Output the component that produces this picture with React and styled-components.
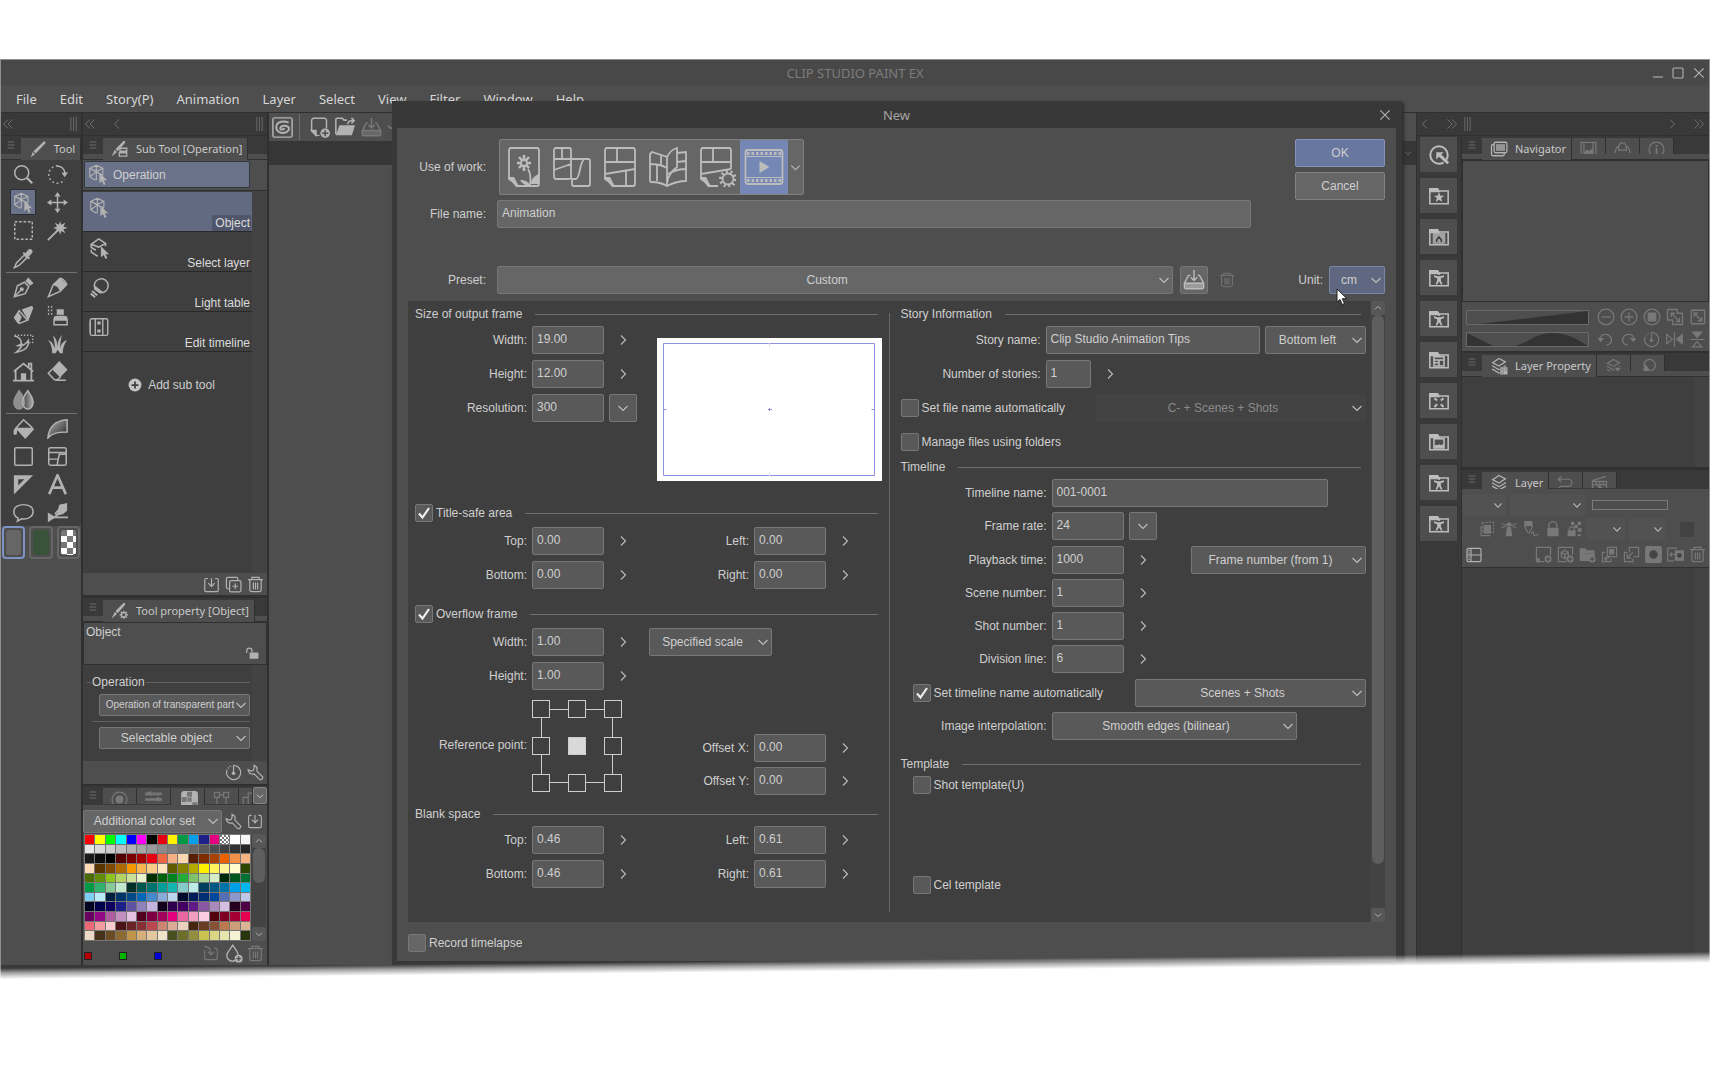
import React from "react";
import styled, { createGlobalStyle, css } from "styled-components";

const c = {
  base: "#4e4e4e",
  panel: "#3f3f3f",
  lane: "#434343",
  header: "#393939",
  edge: "#303030",
  field: "#595959",
  fieldLight: "#666666",
  line: "#727272",
  text: "#cfcfcf",
  icon: "#b2b2b2",
  dim: "#787878",
  blue: "#6a7289",
};

const ui = `"Liberation Sans", Arial, sans-serif`;
const system = `"Noto Sans", "Open Sans", sans-serif`;

const Global = createGlobalStyle`
  *, *::before, *::after { box-sizing: border-box; }
  body { margin: 0; background: #fff; font: 12px/16px ${ui}; color: ${c.text}; }
  button, input, select { font: inherit; color: inherit; margin: 0; }
  button { padding: 0; border: 0; background: none; }
  svg { display: block; flex: none; }
`;

/* ---------- icons ---------- */

const cube = (
  <>
    <path d="M9.500 1.500 17 5v7M9.500 1.500 2 5v9.500l6.500 4M2 5l7.500 3.500L17 5M9.500 8.500v10M2 14.500 9.500 9M2 5l15 8M9.500 1.500v7" strokeWidth="1.300" />
    <path d="M13 10v12l3-2.500 2 4.500 2-1-2-4.300h4z" fill="currentColor" stroke="none" />
  </>
);
const folder = <path d="M2 20.500V4.500h8l1.500 2H22v14z" />;
const folderTab = <path d="M2 4h8.500l1.500 3H2z" fill="currentColor" />;
const stack = <path d="M12 2 20.500 6.500 12 12 3.500 7.500zM3.500 11v1L12 17l8.500-5v-1M3.500 15.500v1L12 21.500l8.500-5v-1" />;
const person = <path d="M12 8.800a1.600 1.600 0 1 0 0-3.200 1.600 1.600 0 0 0 0 3.200M6.500 9l4 1h3l4-1v1.800l-3.500 1.500v2.500l1.800 4.200H14l-2-3.500-2 3.500H8.200L10 14.800v-2.500l-3.500-1.500z" fill="currentColor" stroke="none" />;
const badge = (
  <>
    <circle cx="18.500" cy="18.500" r="5" fill="currentColor" stroke="none" />
    <path d="M18.500 15.500v6M15.500 18.500h6" stroke={c.base} />
  </>
);

const icons = {
  magnifier: <><circle cx="10" cy="10" r="8" /><path d="m16 16 6 6" strokeWidth="2.600" /></>,
  rotate: <><path d="M12 2a10 10 0 1 0 8 16" strokeDasharray="2 3" /><path d="M11 2.300c5 0 9 3 9.500 8.500" /><path d="m16.500 10 3.800 5L24 9.500z" fill="currentColor" stroke="none" /></>,
  cube,
  move: <><path d="M12 3v18M3 12h18" /><path d="M12 0l3.500 5h-7zM12 24l3.500-5h-7zM0 12l5-3.500v7zM24 12l-5-3.500v7z" fill="currentColor" stroke="none" /></>,
  marquee: <rect x="2" y="2" width="20" height="20" strokeDasharray="3 2" />,
  wand: <><path d="M1 23 13 11" strokeWidth="2" /><path d="m15 1 1.300 4.500L21 3l-2.300 4.500L23.500 9l-4.800 1.500L21 15l-4.700-2.300L15 17l-1.300-4.500L9 15l2.300-4.500L7 9l4.500-1.500L9 3l4.700 2.500z" fill="currentColor" stroke="none" /></>,
  dropper: <><path d="M1.500 22.500 4 17l9-9 3 3-9 9z" /><path d="m11 6 7 7 1.500-1.500-1.500-1.500 4-4.500a3 3 0 0 0-4-4L14 6l-1.500-1.500z" fill="currentColor" stroke="none" /></>,
  pen: <><path d="M1.500 22.500 5 10l8-4 5 5-4 8z" /><path d="m1.500 22.500 8-8" /><path d="m14 4.500 5.500 5.500 4-3L17.500.5z" fill="currentColor" stroke="none" /><circle cx="10" cy="14" r="1.500" fill="currentColor" /></>,
  pencil: <><path d="M1.500 22.500 7 9 15 1.500c3 .5 7 4 7.500 7L15 16.500z" /><path d="M7 9 15 1l8 7.500-8 8-3-5z" fill="currentColor" stroke="none" /></>,
  brush: <><path d="M2 14.500 7.500 21l9-3.500L7 6.500z" /><path d="M1 14.500 6 8l4 6-4 8zM10 5l11-4c2 0 2 2 2 3l-5.500 14z" fill="currentColor" stroke="none" /></>,
  airbrush: <><path d="M8 22.500V17c0-3 1-4 4-4h7c3 0 4 1 4 4v5.500zM12 11V6h6v5" /><path d="M8 13h15v5H8zM11 5h8v6h-7z" fill="currentColor" stroke="none" /><path d="M1 2h7M1 6h6M1 10h6" strokeDasharray="1.500 2" strokeWidth="2" /></>,
  decoration: <><path d="M2 2.500h20.500V11h-6" strokeDasharray="1.500 2" /><path d="M1.500 3.500c5 1 8 4 8 8-.5 2-2 2-4 3 6 1 9-1 12-6 1 7-4 12-14 13.500 5-4 7-6 7-10" /></>,
  grass: <path d="M6 23C6 16 4 11 1 8c5 2 7 6 8 10C9 11 8 7 7 3c4 3 5 9 5 13 0-6 2-10 5-14-1 5-2 10-2 15 1-5 4-8 8-9-3 4-5 9-5 15h-3l-3-4-2 4z" fill="currentColor" stroke="none" />,
  house: <><path d="M3 11v11.500M21 11v11.500M0 22.500h24M1 12 12 3l11 9M18 7V3h3v6" strokeWidth="2" /><path d="M9 14h6v8H9z" fill="currentColor" stroke="none" /></>,
  eraser: <><path d="M14 0 23.500 10 15 18.500 5.500 9z" fill="currentColor" stroke="none" /><path d="M6 9.500 1.500 14l7 7.500h3.500l4-4M10 22h11.500" /></>,
  blend: <><defs><linearGradient id="blendFill"><stop offset="0" stopColor="#b2b2b2" stopOpacity="0" /><stop offset="1" stopColor="#b2b2b2" /></linearGradient></defs><path d="M7 2c4 5 6 8 6 13s-3 8-6 8-6-3-6-8S4 7 7 2z" fill="currentColor" opacity=".7" /><path d="M17 2c-4 5-6 8-6 13s3 8 6 8 6-3 6-8-3-8-6-13z" fill="url(#blendFill)" /></>,
  bucket: <><path d="M3 12 12 2l10 9" strokeWidth="1.800" /><path d="M3 11h20l1 2-10 11L5 14l-1 5H1c-1-4 0-7 2-8z" fill="currentColor" stroke="none" /></>,
  gradient: <><defs><linearGradient id="arcFill" x1="0" x2="1" y1="0" y2="1"><stop offset="0" stopColor="#b2b2b2" /><stop offset=".8" stopColor="#3f3f3f" /></linearGradient></defs><path d="M1 23C2 11 9 3 23 2v14C13 16 6 17 1 23z" fill="url(#arcFill)" /></>,
  square: <rect x="2" y="2" width="20" height="20" rx="1.500" />,
  frames: <><rect x="2" y="2" width="20" height="20" rx="2" /><path d="M2 7.500h20M2 15h10M22 9.500H14L11.500 22" /></>,
  ruler: <path d="M1 1.500h22L1 23.500zM6 6v7l7-7z" fill="currentColor" fillRule="evenodd" stroke="none" />,
  text: <path d="M2.500 23 12 1.500 21.500 23M6 15.500h12" strokeWidth="3" />,
  balloon: <path d="M12 3c6 0 11 3 11 8s-5 8.500-11 8.500l-2-.2L5 22l1-3.500C3 17 1 14 1 11c0-5 5-8 11-8z" />,
  correct: <><path d="M1 17.500h23M9 14l5-6" strokeWidth="2" /><path d="M1 12l9 5.500L1 23zM14 3l9-2v9l-5 4-5 1-3 3-2-1 4-5z" fill="currentColor" stroke="none" /></>,
  layers: <><path d="M10.500 2 18 7l-7.500 4L2.500 8zM2.500 8v3.500l5 3M2.500 14v2.500l7 4.500M18 7v3" /><path d="M13 10v12l3-2.500 2 4.500 2-1-2-4.300h4z" fill="currentColor" stroke="none" /></>,
  lightTable: <><path d="M7 14a8 8 0 1 1 6 4z" /><path d="M6 9 17 18H11l-5-4z" fill="currentColor" stroke="none" /><path d="m3.500 16 6 5M2 19l5 4" strokeWidth="2.200" /></>,
  timeline: <><rect x="1.500" y="2" width="21" height="20" rx="2" /><path d="M7.500 2v20M16.500 2v20M1.500 5v14" /><path d="M10 5.500h4v3.500h-4zM10 15h4v3.500h-4z" fill="currentColor" stroke="none" /></>,
  brushTab: <path d="M20 1.500c2 0 2.500 1.500 1.500 3L9 18l-3-3zM5 16l3 3-5.500 3.500z" fill="currentColor" stroke="none" />,
  subTab: <><path d="M17 1c2 0 2.500 1.500 1.500 3L9 15l-3-3zM5 13l3 3-7 6z" fill="currentColor" stroke="none" /><path d="M12 11h9v4h-9zM11 17h10v4.500H11z" /></>,
  propTab: <><path d="M17 1c2 0 2.500 1.500 1.500 3L9 15l-3-3zM5 13l3 3-7 6z" fill="currentColor" stroke="none" /><circle cx="17" cy="17" r="3" /><path d="M17 11.500V14M17 20v2.500M11.500 17H14M20 17h2.500M13 13l2 2M19 19l2 2M21 13l-2 2M15 19l-2 2" /></>,
  plusDisc: <><circle cx="12" cy="12" r="11" fill="currentColor" stroke="none" /><path d="M12 6v12M6 12h12" stroke={c.panel} strokeWidth="3" /></>,
  save: <><path d="M7 3.500H4.500a2 2 0 0 0-2 2V20a2 2 0 0 0 2 2h15a2 2 0 0 0 2-2V5.500a2 2 0 0 0-2-2H17" /><path d="M12 3v11M7.500 10l4.500 5 4.500-5" /></>,
  duplicate: <><path d="M6 18H4a2 2 0 0 1-2-2V4a2 2 0 0 1 2-2h12a2 2 0 0 1 2 2v2" /><rect x="6.500" y="6.500" width="16" height="16" rx="2" /><path d="M14.500 10.500v8M10.500 14.500h8" /></>,
  trash: <path d="M1.500 5h21M7 5V2h10v3M4 5v14a3 3 0 0 0 3 3h10a3 3 0 0 0 3-3V5M9 9v10M12 9v10M15 9v10" />,
  unlock: <><path d="M3 12V8a4.500 4.500 0 0 1 9 0v3" strokeWidth="2" /><rect x="8" y="11" width="15" height="11" rx="1.500" fill="currentColor" stroke="none" /></>,
  dial: <><path d="M12 2a10 10 0 1 1-9 6" /><path d="M4 6 9 2" strokeDasharray="1.500 2" strokeWidth="2" /><path d="M12 2v9" /><circle cx="12" cy="13" r="2.500" fill="currentColor" stroke="none" /></>,
  wrench: <path d="M10 2c3 1 5 4 4 8l8 8c1 2-2 5-4 4l-8-8c-4 1-8-1-8.500-6l4.500 2 3-1 1-3z" />,
  drop: <><path d="M11 1.500c4 6 7 9 7 13a7 7 0 0 1-14.500 0c0-4 4-7 7.500-13z" />{badge}</>,
  importSet: <path d="M2 2c6 0 10 3 10 12M7.500 10l4.500 5 4.500-5M17 5h2.500a2 2 0 0 1 2 2v13a2 2 0 0 1-2 2h-15a2 2 0 0 1-2-2V8" />,
  wheel: <><circle cx="12" cy="12" r="10.500" /><circle cx="12" cy="12" r="5.500" fill="currentColor" stroke="none" /></>,
  sliders: <><path d="M1 3h22v2H1zM1 11h22v2H1zM1 19h22v2H1z" /><path d="M4 3 8 6 8 1zM15 11l4 3v-5z" fill="currentColor" /></>,
  colorSet: <><rect x="1" y="1" width="22" height="22" rx="3" fill="currentColor" /><path d="M8.500 1h7v7h-7zM1 8.500h7v7H1zM16 16h7v6h-7zM9 9h6v6H9z" fill="#777" stroke="none" /></>,
  nodes: <><rect x="2" y="2" width="7" height="7" /><rect x="15" y="2" width="7" height="7" /><path d="M9 5.500h6M5.500 9v11M18.500 9v11M2 20h7M15 20h7" /></>,
  history: <path d="M13 24V3h9M13 9H6v15" />,
  swirl: <><rect x="1" y="1" width="22" height="22" rx="2" /><path d="M19 6.500C14 4 6 5 5 10.500S9 19 14 18s7-5 4-7-8-1-8.500 1.500S12 15 14.500 13" strokeWidth="2.200" /></>,
  newDoc: <><path d="M20 13V4a2.500 2.500 0 0 0-2.500-2.500h-12A2.500 2.500 0 0 0 3 4v12l5 5h4" /><path d="M3 15.500h5V21z" fill="currentColor" /><circle cx="18.500" cy="18.500" r="5.500" fill="currentColor" stroke="none" /><path d="M18.500 15v7M15 18.500h7" stroke={c.base} /></>,
  open: <><path d="M2 20V4c0-1 .5-1.500 1.500-1.500H9l2 2h3M15 9c0-3 2-4 6-4M19 2l3 3-3 3" /><path d="M6 10h17l-3.500 11H2z" fill="currentColor" stroke="none" /></>,
  saveDisk: <><path d="M8 7H6L1.500 15.500V20c0 1 .5 1.500 1.500 1.500h18c1 0 1.500-.5 1.500-1.500v-4.500L18 7h-2M1.500 15.500h21M12 1v11M8.500 9l3.500 3.500L15.500 9" /><path d="M2 16h20v5H2z" fill="currentColor" opacity=".6" stroke="none" /></>,
  quick: <><path d="M21.500 12a9.500 9.500 0 1 0-9.500 9.500" strokeWidth="2.200" /><path d="M21.500 12c0 2-.6 4-1.500 5M12 21.500c2 0 3.500-.5 5-1.500" strokeWidth="2.200" /><path d="M9 9h8l-2.500 2.500L23 20l-2 2-9-8-3 3z" fill="currentColor" stroke="none" /></>,
  fStar: <>{folder}{folderTab}<path d="m12 7.500 1.500 4.200h4.300l-3.500 2.600 1.300 4.200-3.600-2.500-3.600 2.500 1.300-4.200-3.500-2.600h4.300z" fill="currentColor" stroke="none" /></>,
  fHome: <>{folder}{folderTab}<rect x="6" y="8.500" width="12" height="10" fill="currentColor" opacity=".75" /><path d="M9.500 17.500v-2.500l2.500-3 2.500 3v2.500" stroke="#3f3f3f" /></>,
  fPerson: <>{folder}{folderTab}{person}</>,
  fFrame: <>{folder}{folderTab}<path d="M6.500 8.500h11v10h-11zM6.500 12h11M12 12v6M6.500 15H12" /></>,
  fBurst: <>{folder}{folderTab}<path d="m7 9 3 2.500M17 9l-3 2.500M7 18.500l3-3M17 18.500l-3-3" strokeWidth="2.200" /></>,
  fImage: <>{folder}<path d="M2 4h8.500l1.500 3H2z" fill="currentColor" /><rect x="6.500" y="8.500" width="11" height="10" /><path d="m7 16 2-1 1.500.5 2-1 1.500 1 1.500-.5 1.500-1V18H7z" fill="currentColor" stroke="none" /></>,
  navigator: <><rect x="2" y="6" width="17" height="15" rx="2" /><rect x="5.500" y="3" width="17" height="14" rx="2" fill={c.base} /><rect x="8" y="5.500" width="12" height="9" fill="currentColor" opacity=".7" stroke="none" /></>,
  film: <><rect x="1.500" y="2" width="21" height="20" /><path d="M5.500 2v20M18.500 2v20" /><path d="m6 15 4-3 3 2 5-4v12H6z" fill="currentColor" stroke="none" /></>,
  arcTab: <path d="M1.500 17a10.500 12 0 0 1 5-10M22.500 17a10.500 12 0 0 0-5-10M6.500 14V8l2.500-5h6l2.500 5v6M6.500 13h11" />,
  info: <><circle cx="12" cy="12" r="10.500" /><path d="M12 10v9M12 5.500V8" strokeWidth="2.500" /></>,
  minus: <><circle cx="12" cy="12" r="10.500" /><path d="M6 12h12" /></>,
  plus: <><circle cx="12" cy="12" r="10.500" /><path d="M6 12h12M12 6v12" /></>,
  stop: <><circle cx="12" cy="12" r="10.500" /><rect x="7" y="7" width="10" height="10" rx="1" fill="currentColor" /></>,
  fitBoth: <path d="M2 2h13v5h7v15H9v-6H2zM8 8l9 9M7 12V7h5M18 13v5h-5" />,
  fit: <><rect x="3" y="3" width="18" height="18" rx="1" /><path d="m8 8 8 8M7 12V7h5M17 12v5h-5" /></>,
  undo: <><path d="M4 9c4-6 13-6 16 1 2 5-2 10-7 10" /><path d="M1 10h9l-5 6z" fill="currentColor" stroke="none" /></>,
  redo: <><path d="M20 9C16 3 7 3 4 10c-2 5 2 10 7 10" /><path d="M23 10h-9l5 6z" fill="currentColor" stroke="none" /></>,
  flipH: <><path d="M12 2v20M1 5v13l8-6.500z" /><path d="M23 5v13l-8-6.500z" fill="currentColor" /></>,
  flipV: <><path d="M2 12h20M5 22.500h13L11.500 15z" /><path d="M5 1.500h13L11.500 9z" fill="currentColor" /></>,
  stack,
  stackProp: <>{stack}<path d="M13 13h10v10H13z" fill={c.base} stroke="none" /><path d="M14.500 14.500h3v3h-3zM19.500 14.500h3v3h-3zM14.500 19.500h3v3h-3z" /><path d="M19.500 19.500h3v3h-3z" fill="currentColor" /></>,
  stackDown: <>{stack}<path d="M12 13h12l-6 8z" fill="currentColor" stroke={c.base} /></>,
  bulbTab: <><path d="M8 14a8 8 0 1 1 8 4" /><path d="m9 8 8 12H5z" fill="currentColor" stroke="none" /></>,
  undoTab: <path d="M3 6h13a5 5 0 0 1 0 10H6a3 3 0 0 0 0 6M6 2 2 6l4 4" />,
  clap: <><path d="M2 9h20v14H2zM2 8 21 2M6 9l3 5M11 9l3 5M16 9l3 5M2 14h20" /><path d="m11 15 5 4-5 4z" fill="currentColor" /></>,
  clip: <><path d="M5 2h17v15H5z" strokeDasharray="3 2" /><path d="M7 6h11v13H7z" fill="currentColor" stroke="none" /><path d="M3 8v14h14" /></>,
  tower: <><path d="M9 9h6l2 14H7zM8 5l4-4 4 4v3H8z" fill="currentColor" stroke="none" /><path d="M1 4l6 2M1 10l6-2M23 4l-6 2M23 10l-6-2" /></>,
  draft: <><path d="M3 1h10l1 8-5 9-2-1-4-8z" /><path d="M3 1h10v6H3z" fill="currentColor" /><path d="M12 20c2-6 5-5 4-1s3 3 7 1" /></>,
  lock: <><path d="M6 10V7a6 6 0 0 1 12 0v3" strokeWidth="2" /><rect x="3.500" y="10" width="17" height="13" rx="1.500" fill="currentColor" stroke="none" /></>,
  lockAlpha: <><path d="M3.500 14v-2a3.500 3.500 0 0 1 7 0v2" /><path d="M1 14h12v9H1zM6 1h5v5H6zM16 1h5v5h-5zM11 6h5v5h-5zM16 11h6v5h-6zM16 20h5v3h-5z" fill="currentColor" stroke="none" /></>,
  panes: <><rect x="1.500" y="2" width="21" height="20" rx="2" /><path d="M1.500 12h21M7.500 2v20M3.500 5.500h2M3.500 9h2M3.500 15h2M3.500 18.500h2" /></>,
  addLayer: <><path d="M22 13V2H2v20h11" /><path d="M2 18h4v4z" fill="currentColor" />{badge}</>,
  addVector: <><path d="M22 13V2H2v20h11M6 9l5-3 5 3v6l-5 3-5-3zM6 9l5 3 5-3M11 12v6" />{badge}</>,
  addFolder: <><path d="M1 21V3h8l2 3h11v5H8l-4 10z" fill="currentColor" stroke="none" /><path d="M6 11h17l-3 10H2z" fill="currentColor" stroke="none" />{badge}</>,
  transfer: <><path d="M9 2h13v13H9z" /><path d="M12 5h6v6h-6z" fill="currentColor" /><path d="M6 9H2v13h12v-4M12 13c0 4-2 5-6 5M9 14l-4 4 4 4" /></>,
  merge: <path d="M9 9V2h13v13h-7M6 9H2v13h12v-4M14 9l-8 8M6 11v6h6" />,
  mask: <><rect x="1" y="1" width="22" height="22" rx="2" fill="currentColor" /><circle cx="12" cy="12" r="6" fill="#454545" stroke="none" /></>,
  applyMask: <><path d="M14 3H1v18h9M4 12h8M7 9l-3 3 3 3" /><rect x="11" y="6" width="13" height="15" fill="currentColor" stroke="none" /><circle cx="17.500" cy="13.500" r="3.500" fill="#454545" stroke="none" /></>,
  close: <path d="m4 4 16 16M20 4 4 20" />,
  minimize: <path d="M2 20h20" strokeWidth="2.200" />,
  maximize: <rect x="2" y="2" width="20" height="20" rx="2" strokeWidth="2.200" />,
  down: <path d="m3 8 9 9 9-9" />,
  up: <path d="m3 16 9-9 9 9" />,
  right: <path d="m8 3 9 9-9 9" />,
  left: <path d="m16 3-9 9 9 9" />,
  rights: <path d="m3 3 9 9-9 9M12 3l9 9-9 9" />,
  lefts: <path d="m12 3-9 9 9 9M21 3l-9 9 9 9" />,
  burger: <path d="M2 3h20M2 12h20M2 21h20" strokeWidth="2.400" />,
  grip: <path d="M3 0v24M12 0v24M21 0v24" strokeWidth="2.600" />,
};

function Icon({ name, size = 20, weight = 1.7, height }) {
  return (
    <svg width={size} height={height || size} viewBox="0 0 24 24" fill="none" stroke="currentColor" strokeWidth={weight} aria-hidden="true" preserveAspectRatio={height ? "none" : undefined}>
      {icons[name]}
    </svg>
  );
}

const pageCorner = <path d="M4 30h6l5 9.500-11-7z" fill="currentColor" stroke="none" />;
const pageOutline = "M12.500 39H33a2 2 0 0 0 2-2V3a2 2 0 0 0-2-2H7a2 2 0 0 0-2 2v27z";
const workIcons = {
  Illustration: <><path d={pageOutline} />{pageCorner}<path d="M20 8v16M13 16h14M15 10l10 11M25 10 15 21" strokeWidth="2.600" /><circle cx="20" cy="16" r="3" fill="#666" /><path d="M24 22c3 5 3 10 2 16" /><path d="M27 37c0-5 3-8 8-10v10zM26 38c-2-4-6-5-10-5 2 4 6 6 10 5z" fill="currentColor" stroke="none" /></>,
  Webtoon: <path d="M4 1h13a2 2 0 0 1 2 2v27c0 2-1 2-3 2H4a2 2 0 0 1-2-2V3a2 2 0 0 1 2-2zM10 1v11M2 12h17M2 23l17-6M19 12h17a2 2 0 0 1 2 2v23a2 2 0 0 1-2 2H22a2 2 0 0 1-2-2v-5h4c4 0 4-19 8-19" />,
  Comic: <><path d={pageOutline} />{pageCorner}<path d="M17 1v14M5 15h30M5 27l30-5M26 24v15" /></>,
  Book: <path d="M2 7 4 5l15 5v29C14 36 9 35 3 35a1 1 0 0 1-1-1zM19 10c2-4 6-8 10-9v19c-4 3-9 9-10 16M29 6l9-1v29c-8 0-13 2-19 5M9 18v16M2 17c6 0 12 1 17 4M13 8v11M29 15l9-1M20 27c5-3 11-5 18-5" />,
  "Show all": <><path d="M35 22V3a2 2 0 0 0-2-2H7a2 2 0 0 0-2 2v27l7.500 9H22" />{pageCorner}<path d="M17 1v14M5 15h30M5 27l30-5" /><circle cx="32" cy="32" r="5.500" /><circle cx="32" cy="32" r="7.500" strokeDasharray="2 2.700" strokeWidth="3" /></>,
  Animation: <><rect x="1.500" y="3" width="37" height="34" rx="2.500" /><path d="M3 6.500h34M3 33.500h34" strokeDasharray="2.500 2" strokeWidth="3" /><path d="M2 9.500h36M2 30.500h36" strokeWidth="1.200" /><path d="M15.500 14v12l10-6z" fill="currentColor" stroke="none" /></>,
};

/* ---------- window frame ---------- */

const Page = styled.div`
  padding: 59px 0 40px;
  overflow: hidden;
`;
const AppWindow = styled.div`
  position: relative;
  display: flex;
  flex-direction: column;
  background: ${c.header};
  border: solid #8f8f8f;
  border-width: 1px 1px 0;
  padding-bottom: 15px;
`;
const TitleBar = styled.header`
  display: grid;
  grid-template-columns: 1fr auto 1fr;
  align-items: center;
  height: 25px;
  background: #484848;
  color: #7c7c7c;
  font: 13px/18px ${system};
`;
const WindowControls = styled.div`
  grid-column: 3;
  display: flex;
  justify-content: flex-end;
  align-items: center;
  gap: 8px;
  padding-right: 3px;
  color: ${c.icon};
`;
const Title = styled.span`
  grid-column: 2;
`;
const MenuBar = styled.nav`
  display: flex;
  align-items: center;
  gap: 23px;
  height: 27px;
  padding: 0 15px;
  background: ${c.base};
  font: 13px/18px ${system};
`;
const MenuLink = styled.a`
  color: #d6d6d6;
  text-decoration: none;
`;
const Workspace = styled.div`
  display: flex;
  align-items: stretch;
  border-top: 1px solid ${c.edge};
`;
const Column = styled.section`
  display: flex;
  flex-direction: column;
  width: ${(p) => p.$w}px;
  flex: none;
  border-right: 2px solid ${c.edge};
  background: ${(p) => p.$bg || c.header};
`;
const ColumnHead = styled.div`
  display: flex;
  align-items: center;
  gap: ${(p) => p.$gap || 0}px;
  height: 23px;
  padding: 0 4px 0 1px;
  background: ${c.header};
  border-bottom: 1px solid ${c.edge};
  color: ${c.dim};
`;
const HeadGroup = styled.span`
  display: flex;
  gap: 15px;
  width: 46px;
  padding-left: 1px;
`;
const Push = styled.span`
  display: flex;
  gap: 15px;
  margin-left: auto;
`;
const IconButton = styled.button`
  display: grid;
  place-items: center;
  width: ${(p) => p.$w || 22}px;
  height: ${(p) => p.$h || 22}px;
  flex: none;
  color: ${(p) => (p.$dim ? c.dim : c.icon)};
`;

/* ---------- tab strips ---------- */

const Strip = styled.div`
  display: flex;
  align-items: flex-start;
  height: ${(p) => (p.$short ? 19 : 24)}px;
  padding-top: 2px;
  background: ${(p) => (p.$short ? c.header : `linear-gradient(${c.header} 0 18px, ${c.base} 18px)`)};
  border-bottom: ${(p) => (p.$short ? 0 : 1)}px solid ${c.edge};
`;
const Burger = styled.button`
  display: grid;
  place-items: center;
  width: 20px;
  height: 14px;
  color: ${c.dim};
`;
const Tab = styled.button`
  display: flex;
  align-items: ${(p) => (p.$active ? "center" : "flex-start")};
  justify-content: ${(p) => (p.$start ? "flex-start" : "center")};
  gap: 7px;
  height: ${(p) => (p.$active ? 22 : 16)}px;
  width: ${(p) => (p.$w ? `${p.$w}px` : "auto")};
  padding: ${(p) => (p.$active ? "0 5px 0 8px" : "3px 0 0")};
  overflow: hidden;
  background: ${c.base};
  border-right: 1px solid ${c.edge};
  color: ${(p) => (p.$active ? c.icon : c.dim)};
  font: 11px/16px ${system};
  white-space: nowrap;
  span { color: #c9c9c9; }
  svg { overflow: visible; }
`;

function Tabs({ title, icon, iconSize = 18, others = [], short }) {
  return (
    <Strip $short={short}>
      <Burger aria-label="Palette menu"><Icon name="burger" size={8} weight={2} /></Burger>
      <Tab $active><Icon name={icon} size={iconSize} /><span>{title}</span></Tab>
      {others.map((o) => (
        <Tab key={o} $w={34} aria-label={o}><Icon name={o} size={17} /></Tab>
      ))}
    </Strip>
  );
}

/* ---------- tool column ---------- */

const ToolGrid = styled.div`
  display: grid;
  grid-template-columns: 34px 34px;
  grid-auto-rows: 28px;
  margin: 0 4px 0 5px;
  border-top: ${(p) => (p.$line ? 1 : 0)}px solid ${c.line};
`;
const ToolArea = styled.div`
  background: ${c.panel};
`;
const ToolButton = styled.button`
  display: grid;
  place-items: center;
  justify-self: center;
  align-self: center;
  width: 26px;
  height: 26px;
  color: ${c.icon};
  ${(p) => p.$active && css`background: ${c.blue}; border: 1px solid #2c2f38;`}
`;
const Colors = styled.div`
  display: flex;
  gap: 4px;
  height: 33px;
  padding: 0 1px;
`;
const ColorWell = styled.button`
  flex: 1;
  border: 2px solid ${(p) => (p.$active ? "#7d93c4" : "#666")};
  border-radius: 4px;
  padding: 2px;
  display: flex;
  &::before {
    content: "";
    flex: 1;
    align-self: stretch;
    border-radius: 3px;
    background: ${(p) => p.$fill};
  }
`;

const toolSections = [
  ["magnifier", "rotate", "cube", "move", "marquee", "wand", "dropper"],
  ["pen", "pencil", "brush", "airbrush", "decoration", "grass", "house", "eraser", "blend"],
  ["bucket", "gradient", "square", "frames", "ruler", "text", "balloon", "correct"],
];

function ToolColumn() {
  return (
    <Column $w={82} $bg={c.base}>
      <ColumnHead><Icon name="lefts" size={12} /><Push><Icon name="grip" size={7} height={14} /></Push></ColumnHead>
      <Tabs title="Tool" icon="brushTab" />
      <ToolArea>
        {toolSections.map((tools, i) => (
          <ToolGrid key={i} $line={i > 0}>
            {tools.map((t) => (
              <ToolButton key={t} $active={t === "cube"} aria-label={t}><Icon name={t} size={21} /></ToolButton>
            ))}
          </ToolGrid>
        ))}
      </ToolArea>
      <Colors>
        <ColorWell $active $fill="#666" aria-label="Main color" />
        <ColorWell $fill="#39523a" aria-label="Sub color" />
        <ColorWell $fill="repeating-conic-gradient(#fff 0 25%, #777 0 50%) 0 0 / 12px 12px" aria-label="Transparent" />
      </Colors>
    </Column>
  );
}

/* ---------- sub tool column ---------- */

const GroupRow = styled.div`
  height: 31px;
  padding: 1px 17px 3px 1px;
  background: ${c.base};
  border-bottom: 1px solid ${c.edge};
`;
const GroupTab = styled.button`
  display: flex;
  align-items: center;
  gap: 4px;
  width: 100%;
  height: 27px;
  padding: 0 3px;
  border: 1px solid #343843;
  border-radius: 2px;
  background: ${c.blue};
  svg { color: ${c.icon}; }
`;
const SubList = styled.div`
  display: flex;
  flex-direction: column;
  flex: 1;
  min-height: 382px;
  padding-top: 1px;
  border-right: 15px solid ${c.lane};
  background: ${c.panel};
`;
const SubItem = styled.button`
  display: flex;
  align-items: flex-start;
  justify-content: space-between;
  height: 40px;
  padding: 5px 1px 0 6px;
  border-bottom: 1px solid #292929;
  background: ${(p) => (p.$active ? "#626a82" : "transparent")};
  svg { color: ${c.icon}; }
  span {
    align-self: flex-end;
    padding: 0 1px 0 3px;
    margin-bottom: 0;
    border-radius: 2px;
    color: #dcdcdc;
    background: ${(p) => (p.$active ? "#4f566a" : "transparent")};
  }
`;
const AddSub = styled.button`
  display: flex;
  align-items: center;
  justify-content: center;
  gap: 6px;
  margin-top: 25px;
  padding-left: 8px;
  svg { color: #c4c4c4; }
`;
const Foot = styled.div`
  display: flex;
  align-items: center;
  justify-content: flex-end;
  height: ${(p) => p.$h}px;
  padding: 0 1px;
  background: ${c.base};
  flex: none;
`;
const Seam = styled.div`
  height: ${(p) => p.$h}px;
  background: ${c.edge};
`;
const ObjectBox = styled.div`
  display: flex;
  justify-content: space-between;
  height: 43px;
  padding: 1px 7px 4px 2px;
  background: ${c.base};
  border: 1px solid ${c.edge};
  svg { align-self: flex-end; color: ${c.icon}; }
`;
const PropBox = styled.fieldset`
  height: 96px;
  margin: 0;
  padding: 9px 2px 0 4px;
  border: 0;
  border-right: 15px solid ${c.lane};
  background: ${c.panel};
`;
const PropHead = styled.div`
  display: flex;
  align-items: center;
  gap: 1px;
  &::before, &::after { content: ""; height: 1px; background: #626262; width: 4px; }
  &::after { flex: 1; width: auto; }
`;
const PropLine = styled.hr`
  margin: 5px 0 5px 5px;
  border: 0;
  border-top: 1px solid #626262;
`;
const PropField = styled.div`
  margin-left: 12px;
  margin-top: ${(p) => p.$top || 0}px;
`;
const SetRow = styled.div`
  display: flex;
  align-items: center;
  height: 29px;
  padding: 3px 1px 0 0;
  background: ${c.base};
`;
const SetBody = styled.div`
  display: flex;
  height: 107px;
  background: ${c.base};
  padding: 0 1px;
`;
const SwatchGrid = styled.div`
  display: grid;
  grid-template-columns: repeat(16, 1fr);
  grid-template-rows: repeat(11, 1fr);
  gap: 1px;
  flex: 1;
  background: #767676;
  border: 1px solid #767676;
`;
const Swatch = styled.button`
  background: ${(p) => p.$fill};
`;
const BaseColors = styled.div`
  display: flex;
  align-self: flex-end;
  gap: 27px;
  margin: 0 auto 5px 0;
`;
const Dot = styled.button`
  width: 8px;
  height: 8px;
  background: ${(p) => p.$fill};
  border: 1px solid #222;
`;
const Scroll = styled.div`
  display: flex;
  flex-direction: column;
  width: 15px;
  padding-left: 1px;
  background: ${c.lane};
`;
const ScrollButton = styled.button`
  display: grid;
  place-items: center;
  height: 14px;
  background: #575757;
  border-radius: 2px;
  color: ${c.icon};
`;
const Thumb = styled.div`
  flex: ${(p) => p.$grow};
  margin: 0 1px;
  border-radius: 6px;
  background: #5e5e5e;
`;
const Slack = styled.div`
  flex: ${(p) => p.$grow};
`;
const MoreTab = styled.button`
  display: grid;
  place-items: center;
  width: 14px;
  height: 17px;
  margin: -1px 0 0 auto;
  border: 1px solid #858585;
  border-radius: 2px;
  background: #666;
`;

const swatches = [
  "f00 ff0 0f0 0ff 00f f0f 000 e60012 fff100 009944 00a0e9 1d2088 e4007f * fff f4f4f4",
  "e6e6e6 d9d9d9 ccc bfbfbf b3b3b3 a6a6a6 999 8c8c8c 808080 737373 666 595959 4d4d4d 404040 333 262626",
  "1a1a1a 0d0d0d 000 540000 7d0000 a40000 e60012 ee6742 f4b183 fad7ac 5a1e00 7d2d00 a84200 eb6100 f19149 f6b37f",
  "fbdab8 5a3400 7f4a00 ac6a00 f39800 f8b551 facd89 fde8bd 5f5c00 858100 b5ab00 fff100 fff45c fff799 fffccf 2c4500",
  "4a6b00 638c0b 8fc31f b3d465 cce198 e8f3cc 003200 00610f 00821f 22ac38 80c269 acd598 d5ecc8 002b0a 00561f 007130",
  "009944 32b16c 89c997 bfe8cd 003029 005750 00736d 009e96 13b5b1 84ccc9 bceae6 003e5d 005982 0075a9 00a0e9 00b7ee",
  "7ecef4 b8ecfa 001f3f 003567 004986 0068b7 448aca 88abda bdd6ef 000a2c 001c58 002e73 00479d 556fb5 8c97cb bfc6e6",
  "00001f 00004b 0f0060 1d2088 5f52a0 8f82bc c4b5de 12001c 2e0050 440062 601986 8957a1 aa89bd d5bfe1 26001f 4e0045",
  "6a005f 920783 ae5da1 c490bf e3c3e0 520020 7e0043 a4005b e4007f ea68a2 f19ec2 f8cbe0 52000b 7d0022 a40035 e5004f",
  "eb6877 f29c9f f9cccd 4a1316 6b2426 863033 b94750 cb8571 dbab95 ead1bd 47260f 693d22 875233 b97a4e cd9c78 dcb596",
  "ecd9c5 46321b 6b4c25 8d6a34 c1944b d5ae7b e4c6a1 f0e3c9 494f1d 6e6e2b 948f3c cbc34f dcd584 e8e4ad f4f1d4 27360f",
];
const checker = "repeating-conic-gradient(#fff 0 25%, #777 0 50%) 0 0 / 4px 4px";

function SubToolColumn() {
  return (
    <Column $w={186}>
      <ColumnHead $gap={15}>
        <Icon name="lefts" size={12} /><Icon name="left" size={12} />
        <Push><Icon name="grip" size={7} height={14} /></Push>
      </ColumnHead>
      <Tabs title="Sub Tool [Operation]" icon="subTab" />
      <GroupRow><GroupTab><Icon name="cube" size={21} />Operation</GroupTab></GroupRow>
      <SubList>
        <SubItem $active><Icon name="cube" size={21} /><span>Object</span></SubItem>
        <SubItem><Icon name="layers" size={22} /><span>Select layer</span></SubItem>
        <SubItem><Icon name="lightTable" size={21} /><span>Light table</span></SubItem>
        <SubItem><Icon name="timeline" size={20} /><span>Edit timeline</span></SubItem>
        <AddSub><Icon name="plusDisc" size={14} />Add sub tool</AddSub>
      </SubList>
      <Foot $h={22}>
        {["save", "duplicate", "trash"].map((n) => <IconButton key={n} aria-label={n}><Icon name={n} size={17} /></IconButton>)}
      </Foot>
      <Seam $h={3} />
      <Tabs title="Tool property [Object]" icon="propTab" />
      <ObjectBox>Object<Icon name="unlock" size={14} /></ObjectBox>
      <PropBox>
        <PropHead>Operation</PropHead>
        <PropField $top={4}><Select label="Operation of transparent part" h={22} small /></PropField>
        <PropLine />
        <PropField><Select label="Selectable object" h={22} /></PropField>
      </PropBox>
      <Foot $h={23}>
        {["dial", "wrench"].map((n) => <IconButton key={n} aria-label={n}><Icon name={n} size={17} /></IconButton>)}
      </Foot>
      <Seam $h={2} />
      <Strip $short>
        <Burger aria-label="Palette menu"><Icon name="burger" size={8} /></Burger>
        <Tab $w={34} aria-label="Color wheel"><Icon name="wheel" size={17} /></Tab>
        <Tab $w={34} aria-label="Color slider"><Icon name="sliders" size={17} /></Tab>
        <Tab $w={34} $active aria-label="Color set"><Icon name="colorSet" size={17} /></Tab>
        <Tab $w={34} aria-label="Intermediate color"><Icon name="nodes" size={17} /></Tab>
        <Tab $w={14} $start aria-label="Color history"><Icon name="history" size={17} /></Tab>
        <MoreTab aria-label="More palettes"><Icon name="down" size={8} weight={3} /></MoreTab>
      </Strip>
      <SetRow>
        <Select label="Additional color set" h={23} light grow />
        <IconButton aria-label="Edit color set"><Icon name="wrench" size={17} /></IconButton>
        <IconButton aria-label="Import color set"><Icon name="save" size={16} /></IconButton>
      </SetRow>
      <SetBody>
        <SwatchGrid>
          {swatches.flatMap((row, y) => row.split(" ").map((v, x) => (
            <Swatch key={`${y}-${x}`} $fill={v === "*" ? checker : `#${v}`} aria-label={v === "*" ? "Transparent" : `#${v}`} />
          )))}
        </SwatchGrid>
        <Scroll>
          <ScrollButton aria-label="Scroll up"><Icon name="up" size={8} weight={3} /></ScrollButton>
          <Thumb $grow={35} /><Slack $grow={45} />
          <ScrollButton aria-label="Scroll down"><Icon name="down" size={8} weight={3} /></ScrollButton>
        </Scroll>
      </SetBody>
      <Foot $h={24}>
        <BaseColors>
          <Dot $fill="#b40000" aria-label="Red" /><Dot $fill="#00b400" aria-label="Green" /><Dot $fill="#0000d8" aria-label="Blue" />
        </BaseColors>
        <IconButton $dim aria-label="Import"><Icon name="importSet" size={16} /></IconButton>
        <IconButton aria-label="Add color"><Icon name="drop" size={19} /></IconButton>
        <IconButton $dim aria-label="Delete color"><Icon name="trash" size={17} /></IconButton>
      </Foot>
    </Column>
  );
}

/* ---------- canvas ---------- */

const CanvasArea = styled.main`
  display: flex;
  flex-direction: column;
  flex: 1;
  min-width: 0;
  background: ${c.base};
`;
const CommandBar = styled.div`
  display: flex;
  align-items: center;
  gap: 4px;
  height: 28px;
  padding-left: 2px;
`;
const CommandLine = styled.span`
  width: 1px;
  height: 26px;
  margin: 0 4px 0 2px;
  background: #6e6e6e;
`;
const DocTabs = styled.div`
  display: flex;
  align-items: center;
  justify-content: flex-end;
  height: 24px;
  padding-right: 4px;
  background: #363636;
  color: ${c.dim};
`;

/* ---------- right side ---------- */

const Dock = styled.aside`
  display: flex;
  flex-direction: column;
  width: 293px;
  flex: none;
  border-left: 1px solid ${c.edge};
`;
const DockBody = styled.div`
  display: flex;
  flex: 1;
`;
const Materials = styled.div`
  display: flex;
  flex-direction: column;
  gap: 6px;
  width: 45px;
  padding: 1px 4px 0 3px;
  border-right: 1px solid ${c.edge};
`;
const MaterialButton = styled.button`
  display: grid;
  place-items: center;
  height: 35px;
  background: ${c.base};
  color: #bdbdbd;
`;
const Palettes = styled.div`
  display: flex;
  flex-direction: column;
  flex: 1;
  min-width: 0;
`;
const NavView = styled.div`
  height: 142px;
  background: ${c.base};
  border: 1px solid ${c.edge};
`;
const NavControls = styled.div`
  display: grid;
  grid-template-columns: 123px 1fr;
  grid-auto-rows: 22px;
  align-items: center;
  column-gap: 5px;
  height: 49px;
  padding: 4px 1px 0 4px;
  background: ${c.base};
`;
const NavButtons = styled.div`
  display: flex;
`;
const SliderBox = styled.label`
  position: relative;
  display: block;
  height: 15px;
  border: 1px solid #6a6a6a;
  border-radius: 1px;
  svg { width: 100%; height: 100%; }
  input { position: absolute; inset: 0; width: 100%; height: 100%; opacity: 0; }
`;
const DarkPanel = styled.div`
  height: ${(p) => (p.$h ? `${p.$h}px` : "auto")};
  flex: ${(p) => (p.$h ? "none" : 1)};
  background: ${c.panel};
  border-right: 14px solid ${c.lane};
`;
const LayerControls = styled.div`
  height: 79px;
  padding: 5px 1px 0;
  background: ${c.base};
  border-bottom: 1px solid ${c.edge};
`;
const LayerRow = styled.div`
  display: flex;
  align-items: center;
  height: ${(p) => p.$h}px;
  padding-left: ${(p) => p.$left || 0}px;
`;
const BlankSelect = styled.button`
  display: flex;
  align-items: center;
  justify-content: flex-end;
  width: ${(p) => p.$w}px;
  height: 22px;
  margin-right: 4px;
  padding-right: 3px;
  background: #525252;
  border-radius: 2px;
  color: ${c.icon};
`;
const OpacityBar = styled.div`
  width: 76px;
  height: 10px;
  margin-left: 3px;
  border: 1px solid #7a7a7a;
`;
const LayerColor = styled.button`
  width: 14px;
  height: 15px;
  margin-left: 10px;
  background: #424242;
`;

function RightDock() {
  const materials = ["quick", "fStar", "fHome", "fPerson", "fPerson", "fFrame", "fBurst", "fImage", "fPerson", "fPerson"];
  return (
    <Dock>
      <ColumnHead>
        <HeadGroup><Icon name="left" size={12} /><Icon name="rights" size={12} /></HeadGroup>
        <Icon name="grip" size={7} height={14} />
        <Push><Icon name="right" size={12} /><Icon name="rights" size={12} /></Push>
      </ColumnHead>
      <DockBody>
        <Materials>
          {materials.map((m, i) => <MaterialButton key={i} aria-label={`Material folder ${i + 1}`}><Icon name={m} size={22} /></MaterialButton>)}
        </Materials>
        <Palettes>
          <Tabs title="Navigator" icon="navigator" others={["film", "arcTab", "info"]} />
          <NavView />
          <NavControls>
            <SliderBox>
              <svg viewBox="0 0 120 14" preserveAspectRatio="none"><path d="M12 14 120 0v14z" fill="#333" /></svg>
              <input type="range" aria-label="Zoom" />
            </SliderBox>
            <NavButtons>
              {["minus", "plus", "stop", "fitBoth", "fit"].map((n) => <IconButton key={n} $dim $w={23} aria-label={n}><Icon name={n} size={18} /></IconButton>)}
            </NavButtons>
            <SliderBox>
              <svg viewBox="0 0 120 14" preserveAspectRatio="none"><path d="M0 0 26 14H0zM48 14C62 10 68 0 84 0s24 6 36 14z" fill="#333" /></svg>
              <input type="range" aria-label="Rotate" />
            </SliderBox>
            <NavButtons>
              {["undo", "redo", "dial", "flipH", "flipV"].map((n) => <IconButton key={n} $dim $w={23} aria-label={n}><Icon name={n} size={17} /></IconButton>)}
            </NavButtons>
          </NavControls>
          <Seam $h={2} />
          <Tabs title="Layer Property" icon="stackProp" others={["stackDown", "bulbTab"]} />
          <DarkPanel $h={90} />
          <Seam $h={3} />
          <Tabs title="Layer" icon="stack" others={["undoTab", "clap"]} short />
          <LayerControls>
            <LayerRow $h={22}>
              <BlankSelect $w={43} aria-label="Palette color"><Icon name="down" size={10} weight={3} /></BlankSelect>
              <BlankSelect $w={75} aria-label="Blending mode"><Icon name="down" size={10} weight={3} /></BlankSelect>
              <OpacityBar />
            </LayerRow>
            <LayerRow $h={26} $left={13}>
              {["clip", "tower", "draft", "lock", "lockAlpha"].map((n) => <IconButton key={n} $dim aria-label={n}><Icon name={n} size={16} /></IconButton>)}
              <BlankSelect $w={39} aria-label="Mask"><Icon name="down" size={10} weight={3} /></BlankSelect>
              <BlankSelect $w={37} aria-label="Ruler"><Icon name="down" size={10} weight={3} /></BlankSelect>
              <LayerColor aria-label="Layer color" />
            </LayerRow>
            <LayerRow $h={25}>
              <IconButton aria-label="Two panes"><Icon name="panes" size={16} /></IconButton>
              <Push />
              {["addLayer", "addVector", "addFolder", "transfer", "merge", "mask", "applyMask", "trash"].map((n) => <IconButton key={n} $dim aria-label={n}><Icon name={n} size={17} /></IconButton>)}
            </LayerRow>
          </LayerControls>
          <DarkPanel />
        </Palettes>
      </DockBody>
    </Dock>
  );
}

/* ---------- form controls ---------- */

const SelectWrap = styled.div`
  position: relative;
  width: ${(p) => (p.$w ? `${p.$w}px` : "100%")};
  flex: ${(p) => (p.$grow ? 1 : "none")};
  margin-left: ${(p) => (p.$end ? "auto" : 0)};
  color: ${(p) => (p.$off ? "#8a8a8a" : c.text)};
  > svg {
    position: absolute;
    right: 3px;
    top: 50%;
    margin-top: -6px;
    color: #bdbdbd;
    pointer-events: none;
  }
`;
const SelectBox = styled.select`
  appearance: none;
  display: block;
  width: 100%;
  height: ${(p) => p.$h}px;
  padding: 0 ${(p) => (p.$small ? 12 : 19)}px 0 3px;
  font-size: ${(p) => (p.$small ? 10 : 12)}px;
  text-align: center;
  text-align-last: center;
  border: 1px solid ${(p) => (p.disabled ? "#434343" : p.$tone === "blue" ? "#7a86a4" : "#777")};
  border-radius: 2px;
  background: ${(p) => (p.disabled ? "#434343" : p.$tone === "blue" ? "#5f6880" : p.$tone === "light" ? c.fieldLight : c.field)};
  opacity: 1;
`;

function Select({ label, id, h = 28, w, grow, end, light, blue, off, small, name }) {
  return (
    <SelectWrap $w={w} $grow={grow} $end={end} $off={off}>
      <SelectBox id={id} aria-label={id ? undefined : name || label} $h={h} $small={small} $tone={blue ? "blue" : light ? "light" : ""} disabled={off}>
        <option>{label}</option>
      </SelectBox>
      <Icon name="down" size={12} weight={2.4} />
    </SelectWrap>
  );
}

const Input = styled.input`
  width: ${(p) => (p.$w ? `${p.$w}px` : "auto")};
  flex: ${(p) => (p.$w ? "none" : 1)};
  min-width: 0;
  height: 28px;
  padding: 0 4px 2px;
  border: 1px solid #777;
  border-radius: 2px;
  background: ${(p) => (p.$light ? c.fieldLight : c.field)};
`;
const Label = styled.label`
  width: ${(p) => p.$w}px;
  flex: none;
  text-align: right;
  white-space: nowrap;
`;
const Step = styled.button`
  display: grid;
  place-items: center;
  width: 28px;
  height: 28px;
  flex: none;
  margin-left: ${(p) => p.$gap ?? 5}px;
  color: #bdbdbd;
  ${(p) => p.$boxed && css`border: 1px solid #777; border-radius: 2px; background: ${p.$light ? c.fieldLight : c.field};`}
`;
const FieldRow = styled.div`
  display: flex;
  align-items: center;
  min-height: 28px;
  ${Label} { margin-right: 5px; }
`;
const Fields = styled.div`
  display: flex;
  flex-direction: column;
  gap: ${(p) => p.$gap || 6}px;
`;

function NumberField({ id, label, value, w = 72, labelW = 112, list, children }) {
  return (
    <FieldRow>
      <Label htmlFor={id} $w={labelW}>{label}</Label>
      <Input id={id} $w={w} defaultValue={value} />
      <Step type="button" $boxed={list} aria-label={`Adjust ${label}`}><Icon name={list ? "down" : "right"} size={12} weight={2.2} /></Step>
      {children}
    </FieldRow>
  );
}

const CheckLabel = styled.label`
  display: flex;
  align-items: center;
  gap: 3px;
  margin-left: ${(p) => p.$left || 0}px;
  white-space: nowrap;
`;
const CheckBox = styled.input`
  appearance: none;
  width: 18px;
  height: 18px;
  flex: none;
  border: 1px solid #777;
  border-radius: 2px;
  background: ${(p) => (p.$light ? c.fieldLight : c.field)};
  &:checked {
    background: ${c.field} url("data:image/svg+xml,%3Csvg xmlns='http://www.w3.org/2000/svg' viewBox='0 0 16 16'%3E%3Cpath d='M3 8.500l3.500 4L13 3' fill='none' stroke='%23eee' stroke-width='2.200'/%3E%3C/svg%3E") center / 16px no-repeat;
  }
`;

function Check({ children, left, checked, light }) {
  return (
    <CheckLabel $left={left}><CheckBox type="checkbox" defaultChecked={checked} $light={light} />{children}</CheckLabel>
  );
}

/* ---------- dialog ---------- */

const Dialog = styled.section`
  position: absolute;
  top: 41px;
  left: 391px;
  right: 307px;
  padding: 0 6px 14px 5px;
  background: #383838;
  box-shadow: 2px 2px 3px #2b2b2b;
`;
const DialogTitle = styled.header`
  display: grid;
  grid-template-columns: 1fr auto 1fr;
  align-items: center;
  height: 27px;
  color: #a5a5a5;
  font: 13px/18px ${system};
  span { grid-column: 2; }
  button { justify-self: end; }
`;
const DialogBody = styled.form`
  padding: 11px 11px 9px 11px;
  background: ${c.base};
`;
const DialogHead = styled.div`
  display: flex;
  gap: 44px;
  margin-bottom: 38px;
`;
const HeadFields = styled.div`
  display: flex;
  flex-direction: column;
  gap: 5px;
  flex: 1;
`;
const HeadRow = styled.div`
  display: flex;
  align-items: center;
  ${Label} { margin-right: 11px; }
`;
const DialogButtons = styled.div`
  display: flex;
  flex-direction: column;
  gap: 5px;
  width: 90px;
`;
const DialogButton = styled.button`
  height: 28px;
  border: 1px solid ${(p) => (p.$primary ? "#8593b8" : "#828282")};
  border-radius: 2px;
  background: ${(p) => (p.$primary ? "#68779f" : c.fieldLight)};
`;
const WorkTypes = styled.div`
  display: flex;
  height: 56px;
  margin-left: 2px;
  border: 1px solid #808080;
  border-radius: 2px;
  background: ${c.fieldLight};
`;
const WorkButton = styled.button`
  display: grid;
  place-items: center;
  width: ${(p) => p.$w || 48}px;
  color: #bcbcbc;
  background: ${(p) => (p.$active ? "#7487b5" : "transparent")};
`;
const PresetRow = styled(HeadRow)`
  margin-bottom: 7px;
`;
const TrashSlot = styled.div`
  margin-left: 8px;
`;
const UnitLabel = styled.label`
  margin: 0 6px 0 60px;
`;
const UnitBox = styled.div`
  position: relative;
`;
const Pointer = styled.svg`
  position: absolute;
  left: 7px;
  top: 22px;
  z-index: 2;
`;
const Settings = styled.div`
  display: grid;
  grid-template-columns: 1fr 1px 1fr 15px;
  min-height: 621px;
  background: ${c.panel};
`;
const LeftPane = styled.div`
  padding: 3px 11px 0 7px;
`;
const RightPane = styled.div`
  padding: 3px 4px 0 11px;
`;
const PaneLine = styled.div`
  margin: 12px 0 10px;
  background: #696969;
`;
const Heading = styled.div`
  display: flex;
  align-items: center;
  gap: 13px;
  height: 20px;
  margin: ${(p) => p.$top || 0}px ${(p) => p.$right || 0}px ${(p) => (p.$check ? 4 : 2)}px 0;
  &::after { content: ""; flex: 1; height: 1px; background: #6e6e6e; }
`;
const SizeArea = styled.div`
  display: flex;
  justify-content: space-between;
`;
const Preview = styled.svg`
  margin: 12px -4px 0 0;
`;
const ReferenceRow = styled.div`
  display: flex;
  align-items: center;
  margin-top: 10px;
  > ${Label} { margin: 0 5px 6px 0; }
`;
const Anchors = styled.div`
  position: relative;
  display: grid;
  grid-template-columns: repeat(3, 18px);
  grid-template-rows: repeat(3, 18px);
  justify-content: space-between;
  align-content: space-between;
  width: 90px;
  height: 92px;
  margin-bottom: 3px;
  &::before {
    content: "";
    position: absolute;
    inset: 9px;
    border: 1px solid #cdcdcd;
  }
`;
const Anchor = styled.input`
  appearance: none;
  z-index: 1;
  width: 18px;
  height: 18px;
  margin: 0;
  border: 1px solid #cdcdcd;
  background: ${c.panel};
  &:checked { background: #d9d9d9; }
`;
const Offsets = styled.div`
  align-self: flex-end;
  margin-left: 15px;
  display: flex;
  flex-direction: column;
  gap: 5px;
`;
const Block = styled.div`
  margin-top: ${(p) => p.$top}px;
`;
const Fade = styled.div`
  position: absolute;
  left: -1px;
  right: -1px;
  bottom: -15px;
  height: 60px;
  pointer-events: none;
  background: linear-gradient(179.45deg, rgba(255, 255, 255, 0) calc(50% - 5px), rgba(255, 255, 255, .55) 50%, #fff calc(50% + 6px));
`;

function NewDialog() {
  return (
    <Dialog role="dialog" aria-label="New">
      <DialogTitle>
        <span>New</span>
        <IconButton aria-label="Close"><Icon name="close" size={14} weight={2} /></IconButton>
      </DialogTitle>
      <DialogBody onSubmit={(e) => e.preventDefault()}>
        <DialogHead>
          <HeadFields>
            <HeadRow>
              <Label as="span" $w={78}>Use of work:</Label>
              <WorkTypes role="group" aria-label="Use of work">
                {Object.entries(workIcons).map(([name, art]) => (
                  <WorkButton key={name} type="button" aria-label={name} $active={name === "Animation"}>
                    <svg width="40" height="40" viewBox="0 0 40 40" fill="none" stroke="currentColor" strokeWidth="1.800">{art}</svg>
                  </WorkButton>
                ))}
                <WorkButton type="button" $w={15} aria-label="More uses"><Icon name="down" size={11} weight={2.5} /></WorkButton>
              </WorkTypes>
            </HeadRow>
            <HeadRow>
              <Label htmlFor="file" $w={78}>File name:</Label>
              <Input id="file" $light defaultValue="Animation" />
            </HeadRow>
          </HeadFields>
          <DialogButtons>
            <DialogButton $primary>OK</DialogButton>
            <DialogButton type="button">Cancel</DialogButton>
          </DialogButtons>
        </DialogHead>

        <PresetRow>
          <Label htmlFor="preset" $w={78}>Preset:</Label>
          <Select id="preset" label="Custom" light grow />
          <Step type="button" $boxed $light $gap={7} aria-label="Save preset"><Icon name="saveDisk" size={22} weight={1.5} /></Step>
          <TrashSlot><IconButton type="button" $dim aria-label="Delete preset"><Icon name="trash" size={16} weight={1.5} /></IconButton></TrashSlot>
          <UnitLabel htmlFor="unit">Unit:</UnitLabel>
          <UnitBox>
            <Select id="unit" label="cm" blue w={56} />
            <Pointer width="12" height="18" viewBox="0 0 12 18"><path d="M1 1v13l3-2.500 2.200 5 2.300-1-2.200-4.800H11z" fill="#fff" stroke="#222" /></Pointer>
          </UnitBox>
        </PresetRow>

        <Settings>
          <LeftPane>
            <Heading>Size of output frame</Heading>
            <SizeArea>
              <Fields>
                <NumberField id="ow" label="Width:" value="19.00" />
                <NumberField id="oh" label="Height:" value="12.00" />
                <NumberField id="res" label="Resolution:" value="300" list />
              </Fields>
              <Preview width="225" height="143" viewBox="0 0 225 143" fill="none" stroke="#8f8fe0">
                <path d="M0 0h225v143H0z" fill="#fff" stroke="none" />
                <path d="M6.500 5.500h211v132h-211zM6.500 71.500h3M214.500 71.500h3M111 71.500h4M112.500 70v3" />
                <path d="M112.500 5v4M112.500 134v4" stroke="#dcdcf8" />
              </Preview>
            </SizeArea>

            <Heading $check $top={22}><Check checked>Title-safe area</Check></Heading>
            <Fields>
              <FieldRow><NumberField id="tt" label="Top:" value="0.00" /><NumberField id="tl" label="Left:" value="0.00" /></FieldRow>
              <FieldRow><NumberField id="tb" label="Bottom:" value="0.00" /><NumberField id="tr" label="Right:" value="0.00" /></FieldRow>
            </Fields>

            <Heading $check $top={15}><Check checked>Overflow frame</Check></Heading>
            <Fields>
              <FieldRow>
                <NumberField id="fw" label="Width:" value="1.00" />
                <PropField><Select name="Scale" label="Specified scale" w={123} /></PropField>
              </FieldRow>
              <NumberField id="fh" label="Height:" value="1.00" />
            </Fields>
            <ReferenceRow>
              <Label as="span" $w={112}>Reference point:</Label>
              <Anchors role="radiogroup" aria-label="Reference point">
                {Array.from({ length: 9 }, (_, i) => (
                  <Anchor key={i} type="radio" name="anchor" defaultChecked={i === 4} aria-label={`Point ${i + 1}`} />
                ))}
              </Anchors>
              <Offsets>
                <NumberField id="ox" label="Offset X:" value="0.00" />
                <NumberField id="oy" label="Offset Y:" value="0.00" />
              </Offsets>
            </ReferenceRow>

            <Heading $top={9}>Blank space</Heading>
            <Fields>
              <FieldRow><NumberField id="bt" label="Top:" value="0.46" /><NumberField id="bl" label="Left:" value="0.61" /></FieldRow>
              <FieldRow><NumberField id="bb" label="Bottom:" value="0.46" /><NumberField id="br" label="Right:" value="0.61" /></FieldRow>
            </Fields>
          </LeftPane>
          <PaneLine />
          <RightPane>
            <Heading $right={5}>Story Information</Heading>
            <Fields>
              <FieldRow>
                <Label htmlFor="story" $w={140}>Story name:</Label>
                <Input id="story" $w={214} defaultValue="Clip Studio Animation Tips" />
                <Select name="Binding point" label="Bottom left" w={101} end />
              </FieldRow>
              <NumberField id="count" label="Number of stories:" value="1" w={45} labelW={140} />
              <FieldRow><Check>Set file name automatically</Check><Select name="File name pattern" label="C- + Scenes + Shots" w={270} end off /></FieldRow>
              <FieldRow><Check>Manage files using folders</Check></FieldRow>
            </Fields>

            <Heading $top={1} $right={5}>Timeline</Heading>
            <Fields $gap={5}>
              <FieldRow>
                <Label htmlFor="tname" $w={146}>Timeline name:</Label>
                <Input id="tname" $w={276} defaultValue="001-0001" />
              </FieldRow>
              <NumberField id="rate" label="Frame rate:" value="24" labelW={146} list />
            </Fields>
            <Block $top={6}>
              <Fields $gap={5}>
                <NumberField id="play" label="Playback time:" value="1000" labelW={146}>
                  <Select name="Time display" label="Frame number (from 1)" w={175} end />
                </NumberField>
                <NumberField id="scene" label="Scene number:" value="1" labelW={146} />
                <NumberField id="shot" label="Shot number:" value="1" labelW={146} />
                <NumberField id="div" label="Division line:" value="6" labelW={146} />
              </Fields>
            </Block>
            <Block $top={6}>
              <Fields $gap={5}>
                <FieldRow><Check left={12} checked>Set timeline name automatically</Check><Select name="Timeline name pattern" label="Scenes + Shots" w={231} end /></FieldRow>
                <FieldRow><Label htmlFor="interp" $w={146}>Image interpolation:</Label><Select id="interp" label="Smooth edges (bilinear)" w={245} /></FieldRow>
              </Fields>
            </Block>

            <Heading $top={14} $right={5}>Template</Heading>
            <Check left={12}>Shot template(U)</Check>
            <Block $top={82}><Check left={12}>Cel template</Check></Block>
          </RightPane>
          <Scroll>
            <ScrollButton type="button" aria-label="Scroll up"><Icon name="up" size={8} weight={3} /></ScrollButton>
            <Thumb $grow={549} /><Slack $grow={44} />
            <ScrollButton type="button" aria-label="Scroll down"><Icon name="down" size={8} weight={3} /></ScrollButton>
          </Scroll>
        </Settings>
        <Block $top={12}><Check light>Record timelapse</Check></Block>
      </DialogBody>
    </Dialog>
  );
}

const menus = ["File", "Edit", "Story(P)", "Animation", "Layer", "Select", "View", "Filter", "Window", "Help"];

export default function App() {
  return (
    <Page>
      <Global />
      <AppWindow>
        <TitleBar>
          <Title>CLIP STUDIO PAINT EX</Title>
          <WindowControls>
            <IconButton $w={12} $h={12} aria-label="Minimize"><Icon name="minimize" size={12} /></IconButton>
            <IconButton $w={12} $h={12} aria-label="Maximize"><Icon name="maximize" size={12} /></IconButton>
            <IconButton $w={14} $h={14} aria-label="Close window"><Icon name="close" size={14} weight={2} /></IconButton>
          </WindowControls>
        </TitleBar>
        <MenuBar>
          {menus.map((m) => <MenuLink key={m} href="#">{m}</MenuLink>)}
        </MenuBar>
        <Workspace>
          <ToolColumn />
          <SubToolColumn />
          <CanvasArea>
            <CommandBar>
              <IconButton aria-label="Clip Studio"><Icon name="swirl" size={21} /></IconButton>
              <CommandLine />
              <IconButton aria-label="New"><Icon name="newDoc" size={21} /></IconButton>
              <IconButton aria-label="Open"><Icon name="open" size={22} /></IconButton>
              <IconButton $dim aria-label="Save"><Icon name="saveDisk" size={21} /></IconButton>
              <IconButton $w={10} aria-label="Save options"><Icon name="down" size={8} weight={2.5} /></IconButton>
            </CommandBar>
            <DocTabs><Icon name="down" size={8} weight={2.5} /></DocTabs>
          </CanvasArea>
          <RightDock />
        </Workspace>
        <NewDialog />
        <Fade />
      </AppWindow>
    </Page>
  );
}
